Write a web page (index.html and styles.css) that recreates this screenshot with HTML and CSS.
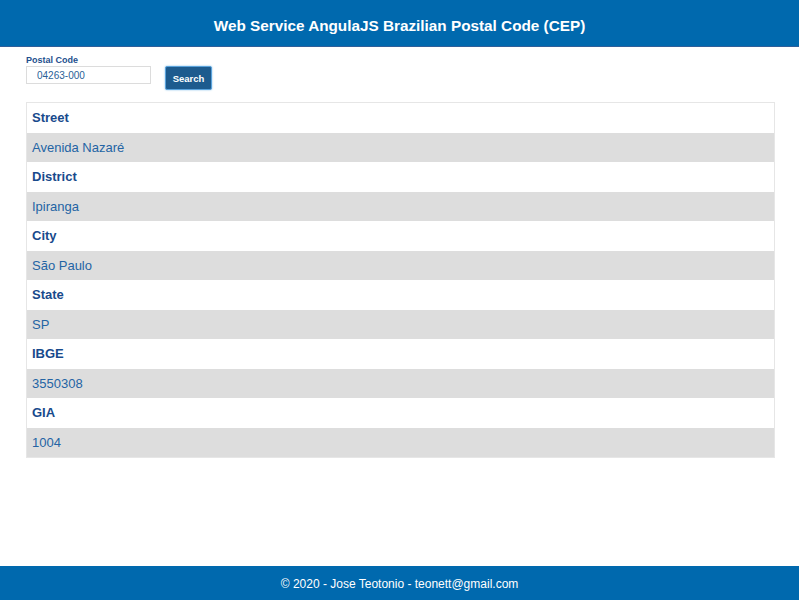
FILE: index.html
```html
<!DOCTYPE html>
<html lang="en">
<head>
<meta charset="utf-8">
<title>Web Service AngulaJS Brazilian Postal Code (CEP)</title>
<link rel="stylesheet" href="styles.css">
</head>
<body>
<div class="page">
  <header class="topbar">
    <h1 class="title">Web Service AngulaJS Brazilian Postal Code (CEP)</h1>
  </header>
  <main class="content">
    <form class="search">
      <div class="field">
        <label class="label" for="cep">Postal Code</label>
        <input class="input" id="cep" type="text" value="04263-000">
      </div>
      <button class="btn" type="button">Search</button>
    </form>
    <div class="results">
      <div class="row key">Street</div>
      <div class="row val">Avenida Nazaré</div>
      <div class="row key">District</div>
      <div class="row val">Ipiranga</div>
      <div class="row key">City</div>
      <div class="row val">São Paulo</div>
      <div class="row key">State</div>
      <div class="row val">SP</div>
      <div class="row key">IBGE</div>
      <div class="row val">3550308</div>
      <div class="row key">GIA</div>
      <div class="row val">1004</div>
    </div>
  </main>
  <footer class="footer">© 2020 - Jose Teotonio - teonett@gmail.com</footer>
</div>
</body>
</html>
```
FILE: styles.css
```css
* { box-sizing: border-box; }
html, body { margin: 0; padding: 0; }
body {
  font-family: "Liberation Sans", Arial, sans-serif;
  background: #fff;
}
.page {
  min-height: 600px;
  display: flex;
  flex-direction: column;
}
.topbar {
  background: #0069ae;
  border-bottom: 1px solid #2f5f9a;
  height: 47px;
  display: flex;
  align-items: center;
  justify-content: center;
}
.title {
  margin: 0;
  color: #fff;
  font-size: 15.3px;
  font-weight: bold;
  padding-top: 5px;
}
.content {
  flex: 1;
  padding: 8px 24px 0 26px;
}
.search {
  display: flex;
  align-items: flex-start;
  gap: 14px;
  margin: 0;
}
.field {
  display: flex;
  flex-direction: column;
}
.label {
  font-size: 9px;
  font-weight: bold;
  color: #1e4f8e;
  line-height: 11px;
  height: 11px;
}
.input {
  width: 125px;
  height: 18px;
  border: 1px solid #dcdcdc;
  padding: 0 0 0 10px;
  font-family: "Liberation Sans", Arial, sans-serif;
  font-size: 10px;
  color: #2a5f97;
  margin: 0;
  outline: none;
}
.btn {
  margin-top: 11px;
  width: 47px;
  height: 24px;
  background: #1d5b8e;
  color: #fff;
  border: 1px solid #5aa3dc;
  box-shadow: 0 0 2px #7fb9e6;
  border-radius: 2px;
  font-family: "Liberation Sans", Arial, sans-serif;
  font-size: 9.5px;
  font-weight: bold;
  padding: 0;
}
.results {
  margin-top: 12px;
  border: 1px solid #e6e6e6;
}
.row {
  height: 29.5px;
  line-height: 29.5px;
  padding-left: 5px;
  font-size: 13px;
}
.key {
  background: #fff;
  color: #184a8c;
  font-weight: bold;
}
.val {
  background: #dddddd;
  color: #2464a4;
}
.footer {
  background: #0069ae;
  color: #fff;
  text-align: center;
  height: 34px;
  line-height: 36px;
  font-size: 12px;
}
```
